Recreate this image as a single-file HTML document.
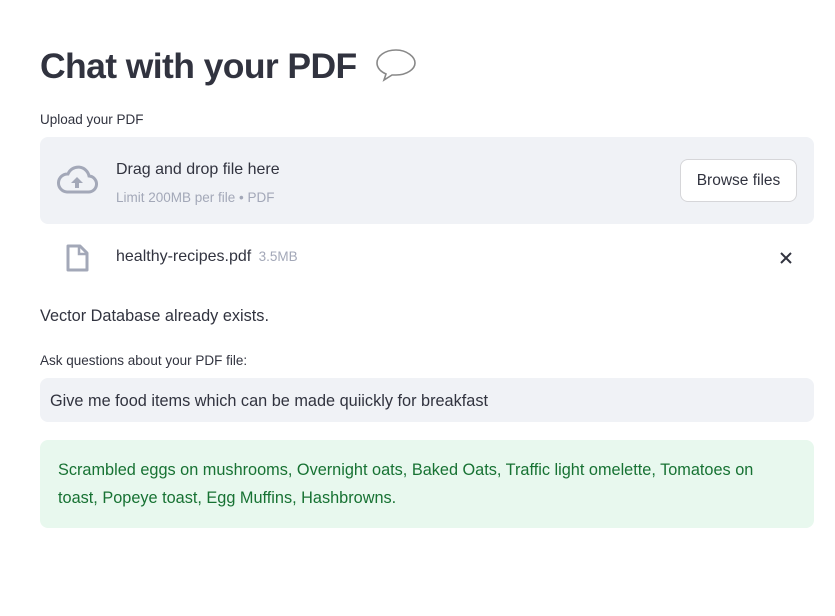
<!DOCTYPE html>
<html><head><style>
body{margin:0;width:835px;height:616px;background:#fff;font-family:"Liberation Sans",sans-serif;color:#31333f;position:relative;overflow:hidden}
.a{position:absolute;white-space:nowrap}
</style></head><body>
<div class="a" style="left:40px;top:43px;font-size:35.5px;font-weight:bold;letter-spacing:-0.6px;line-height:46px">Chat with your PDF</div>
<svg class="a" style="left:374px;top:47px" width="44" height="36" viewBox="0 0 44 36"><path d="M22 3C11 3 3 9 3 16c0 5 4 9 9 11l-2 6 8-5c1 0 3 0 4 0 11 0 19-6 19-12S33 3 22 3z" fill="none" stroke="#888" stroke-width="1.6"/></svg>
<div class="a" style="left:40px;top:112px;font-size:13.5px">Upload your PDF</div>
<div class="a" style="left:40px;top:137px;width:774px;height:87px;background:#f0f2f6;border-radius:8px"></div>
<svg class="a" style="left:56px;top:164px" width="42" height="32" viewBox="0 0 42 32"><path d="M11 28h21a8 8 0 0 0 1-16 11 11 0 0 0-21-2A9 9 0 0 0 11 28z" fill="none" stroke="#a3a8b8" stroke-width="3"/><path d="M21 13l-6 6h4v5h4v-5h4z" fill="#a3a8b8"/></svg>
<div class="a" style="left:116px;top:161px;font-size:16px">Drag and drop file here</div>
<div class="a" style="left:116px;top:190px;font-size:13.5px;color:#a3a8b8">Limit 200MB per file • PDF</div>
<div class="a" style="left:680px;top:159px;width:115px;height:41px;border:1px solid #d6d6d9;border-radius:8px;background:#fff;text-align:center;line-height:41px;font-size:15.5px">Browse files</div>
<svg class="a" style="left:66px;top:244px" width="24" height="28" viewBox="0 0 24 28"><path d="M2 2h12l7 7v17H2z" fill="none" stroke="#a3a8b8" stroke-width="3" stroke-linejoin="round"/><path d="M13 2v8h8" fill="none" stroke="#a3a8b8" stroke-width="2.5"/></svg>
<div class="a" style="left:116px;top:248px;font-size:16px">healthy-recipes.pdf <span style="font-size:13.5px;color:#a3a8b8;margin-left:3px">3.5MB</span></div>
<svg class="a" style="left:779px;top:251px" width="14" height="14" viewBox="0 0 14 14"><path d="M2 2l10 10M12 2L2 12" stroke="#31333f" stroke-width="2"/></svg>
<div class="a" style="left:40px;top:307px;font-size:16.3px">Vector Database already exists.</div>
<div class="a" style="left:40px;top:353px;font-size:13.5px">Ask questions about your PDF file:</div>
<div class="a" style="left:40px;top:378px;width:774px;height:44px;background:#f0f2f6;border-radius:8px"></div>
<div class="a" style="left:50px;top:392px;font-size:16.3px">Give me food items which can be made quiickly for breakfast</div>
<div class="a" style="left:40px;top:440px;width:774px;height:88px;background:#e8f8ee;border-radius:8px"></div>
<div class="a" style="left:58px;top:456px;font-size:16.3px;color:#177233;line-height:28px;white-space:normal;width:750px">Scrambled eggs on mushrooms, Overnight oats, Baked Oats, Traffic light omelette, Tomatoes on<br>toast, Popeye toast, Egg Muffins, Hashbrowns.</div>
</body></html>
